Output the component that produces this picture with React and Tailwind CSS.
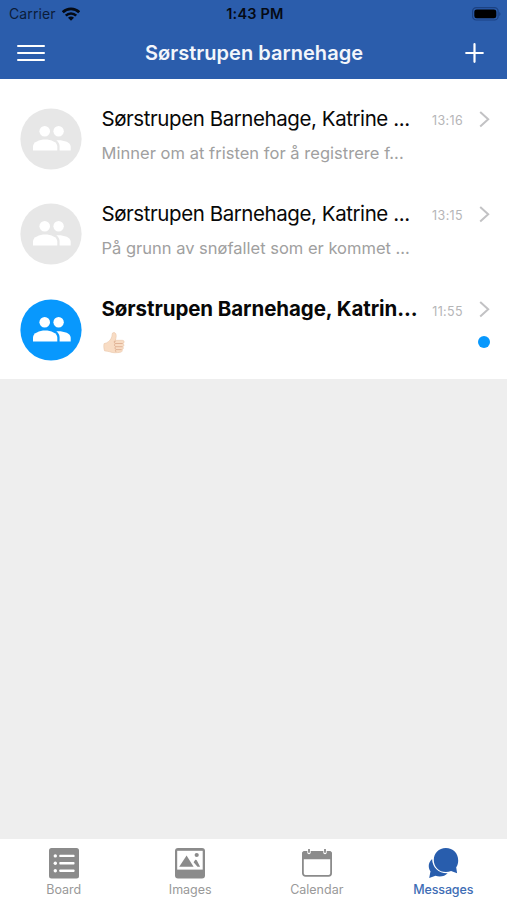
import React from "react";

const messages = [
  {
    id: 1,
    title: "Sørstrupen Barnehage, Katrine ...",
    preview: "Minner om at fristen for å registrere f...",
    previewStyle: "tracking-[0.030px]",
    time: "13:16",
    unread: false,
  },
  {
    id: 2,
    title: "Sørstrupen Barnehage, Katrine ...",
    preview: "På grunn av snøfallet som er kommet ...",
    previewStyle: "tracking-[0px]",
    time: "13:15",
    unread: false,
  },
  {
    id: 3,
    title: "Sørstrupen Barnehage, Katrin...",
    preview: null,
    time: "11:55",
    unread: true,
  },
];

const WifiIcon = () => (
  <svg width="18" height="14" viewBox="0 0 18 14" fill="none" stroke="#050a14" className="-mt-px">
    <path d="M.8 5.200C5.200.7 12.800.7 17.200 5.200" strokeWidth="2.700" />
    <path d="M3.800 8.600c2.900-2.900 7.500-2.900 10.400 0" strokeWidth="2.600" />
    <path d="M9 13.700 6 10.800c1.600-1.600 4.400-1.600 6 0z" fill="#050a14" stroke="none" />
  </svg>
);

const BatteryIcon = () => (
  <svg width="29" height="14" viewBox="0 0 29 14" className="-mt-px">
    <rect x="0.600" y="0.600" width="25.500" height="12.400" rx="3.600" fill="none" stroke="#1c4283" strokeWidth="1.200" />
    <rect x="2.300" y="2.400" width="22" height="8.900" rx="2.400" fill="#000" />
    <path d="M27.300 5v4c1.500-.6 1.500-3.400 0-4z" fill="#1c4283" />
  </svg>
);

const PeopleAvatar = ({ unread }) => (
  <svg width="62" height="62" viewBox="0 0 62 62" fill="#fff" className="ml-[20px] mt-[17px] shrink-0">
    <circle cx="31" cy="31" r="30.600" fill={unread ? "#0898fd" : "#e7e7e7"} />
    <circle cx="24.700" cy="23.300" r="5.300" />
    <circle cx="38.600" cy="23.300" r="5.200" />
    <path d="M13 42.500v-4c0-4.200 6.400-6.900 12.200-6.900s12.100 2.700 12.100 6.900v4z" />
    <path d="M39.600 42.500v-4.200c0-2.600-1.300-4.600-3.300-6.100 6.600-.5 14.400 1.600 14.400 6.300v4z" />
  </svg>
);

const ThumbIcon = () => (
  <svg width="22" height="22" viewBox="0 0 22 22">
    <path
      d="M1 11.700c1.600-.4 3.300-1 4.700-2.200C7.800 7.600 9.100 5.300 9.200 2c0-1.800 2.900-1.900 3.700-.1.700 1.700.1 4.100-.5 6.400h7c2.100 0 2.300 2.800.5 3.200 1.500.7 1.300 2.900-.2 3.200 1.100.8.800 2.700-.7 2.900.7 1-.1 2.600-1.500 2.600-3.500.8-8 .8-10.700-.4-1.500-.6-3.700-.6-5.200-.9-.8-2.200-1-4.700-.6-7.200z"
      fill="#f8dcc4"
      stroke="#e9c6aa"
      strokeWidth="0.600"
    />
    <path
      d="M12.400 8.300c-.7.400-1.200 1-1.300 1.800M12.400 11.500h7.300M12.700 14.700h6.800M13 17.600h5.600M12.600 9.500c-1.500.8-1.500 1.700-.2 2-1.300.8-1.100 2.500.3 3.200-1 .8-.8 2.300.3 2.900-.8.600-.7 1.700.2 2.300"
      fill="none"
      stroke="#dba98c"
      strokeWidth="0.800"
    />
  </svg>
);

const ChevronIcon = () => (
  <svg width="11" height="17" viewBox="0 0 11 17" fill="none" stroke="#c2c2c4" strokeWidth="2">
    <path d="M1.200 1 9.200 8.300l-8 7.300" />
  </svg>
);

const BoardIcon = () => (
  <svg width="30" height="31" viewBox="0 0 30 31">
    <rect width="30" height="30.500" rx="2.500" fill="#8b8b8b" />
    <g fill="#fff">
      <circle cx="6.300" cy="7.900" r="1.700" />
      <circle cx="6.300" cy="15.300" r="1.700" />
      <circle cx="6.300" cy="22.800" r="1.700" />
      <rect x="10.300" y="6.700" width="15.200" height="2.400" rx=".7" />
      <rect x="10.300" y="14.100" width="15.200" height="2.400" rx=".7" />
      <rect x="10.300" y="21.600" width="15.200" height="2.400" rx=".7" />
    </g>
  </svg>
);

const ImagesIcon = () => (
  <svg width="30" height="31" viewBox="0 0 30 31" fill="#8b8b8b">
    <rect width="30" height="30.500" rx="3" />
    <rect x="2.200" y="2.800" width="25.500" height="18.800" fill="#fff" />
    <path d="M4.200 18.800 11.600 7.500l7 11.300z" />
    <circle cx="21.700" cy="7" r="2.100" />
    <path d="m18.600 14.200 1.700-2.400c.7-.2 1.300.2 1.600.8l3.200 6.200h-2.600z" />
  </svg>
);

const CalendarIcon = () => (
  <svg width="30" height="30" viewBox="0 0 30 30">
    <rect x=".9" y="3.800" width="28.200" height="24" rx="2.500" fill="#fff" stroke="#8b8b8b" strokeWidth="1.800" />
    <path d="M0 11.300V5.600C0 4 1.300 3 2.800 3h24.400C28.700 3 30 4 30 5.600v5.700z" fill="#8b8b8b" />
    <rect x="5.300" y="1.400" width="3.400" height="4.800" rx="1.700" fill="#fff" />
    <rect x="21.300" y="1.400" width="3.400" height="4.800" rx="1.700" fill="#fff" />
    <path d="M7 1v3.700M23 1v3.700" stroke="#8b8b8b" strokeWidth="1.800" />
  </svg>
);

const MessagesIcon = () => (
  <svg width="31" height="31" viewBox="0 0 31 31" fill="#285dad">
    <path d="M4.100 11C-.6 15 .4 20.800 2.500 23.300L1.200 30l6.300-2.200c4.500 1.700 9.500.4 12.200-2.500C11 25.700 4.300 19.500 4.100 11z" />
    <path d="M17.800.1C10.800.1 5.800 5.400 5.800 12c0 6.700 5 12.100 12 12.100 1.900 0 3.700-.4 5.300-1.100l6 2.200-.9-5.900c1.300-1.900 2-4.300 2-6.900C30.200 5.400 25.100.1 17.800.1z" />
  </svg>
);

const tabs = [
  { name: "Board", icon: BoardIcon, active: false },
  { name: "Images", icon: ImagesIcon, active: false },
  { name: "Calendar", icon: CalendarIcon, active: false },
  { name: "Messages", icon: MessagesIcon, active: true },
];

const Header = () => (
  <header className="h-[79px] shrink-0 bg-[#2b5dac]">
    <div className="grid h-7 grid-cols-3 items-center pl-[9px] pr-[6px] text-[#050a14]">
      <div className="flex items-center gap-[6px]">
        <span className="-mt-[2px] text-[14px] tracking-[0.1px] text-[#0b1c39]">Carrier</span>
        <WifiIcon />
      </div>
      <span className="whitespace-nowrap text-center text-[14.500px] font-semibold tracking-[0.2px]">1:43 PM</span>
      <div className="flex justify-end">
        <BatteryIcon />
      </div>
    </div>
    <div className="flex h-[50px] items-center justify-between pl-[17px] pr-[23px]">
      <button className="flex w-7 flex-col gap-[5px]">
        <span className="h-[2px] w-full rounded bg-white"></span>
        <span className="h-[2px] w-full rounded bg-white"></span>
        <span className="h-[2px] w-full rounded bg-white"></span>
      </button>
      <h1 className="mr-[2px] whitespace-nowrap text-[20px] font-semibold tracking-[0.04px] text-[#f3f6fb]">
        Sørstrupen barnehage
      </h1>
      <button>
        <svg width="19" height="20" viewBox="0 0 19 20" stroke="#fff" strokeWidth="2.200" strokeLinecap="round">
          <path d="M9.500 1.200v17.600M1.200 10h16.600" />
        </svg>
      </button>
    </div>
  </header>
);

const MessageRow = ({ message }) => (
  <li className="flex h-[95.330px]">
    <PeopleAvatar unread={message.unread} />
    <div className="ml-[19.500px] mt-[13.500px] w-[320px] shrink-0 whitespace-nowrap">
      <h2
        className={`text-[20.500px] leading-7 text-[#080808] ${
          message.unread ? "font-bold tracking-[-0.080px]" : "font-normal tracking-[-0.430px]"
        }`}
      >
        {message.title}
      </h2>
      {message.preview ? (
        <p className={`mt-[8px] text-[16.500px] leading-6 text-[#a0a0a0] ${message.previewStyle}`}>{message.preview}</p>
      ) : (
        <div className="ml-[1px] mt-[9px]">
          <ThumbIcon />
        </div>
      )}
    </div>
    <div className="mt-[18px] flex flex-1 flex-col items-end pr-[17px]">
      <div className="flex items-center gap-[16px]">
        <time className="mt-[4px] whitespace-nowrap text-[12.500px] leading-4 tracking-[0.360px] text-[#b5b5b7]">
          {message.time}
        </time>
        <ChevronIcon />
      </div>
      {message.unread && <span className="mt-[16px] h-[12.500px] w-[12.500px] rounded-full bg-[#0898fd]"></span>}
    </div>
  </li>
);

const TabBar = () => (
  <nav className="grid h-[61px] shrink-0 grid-cols-4 bg-white pl-[0.500px] pr-[0.500px]">
    {tabs.map((tab) => (
      <button
        key={tab.name}
        className={`flex flex-col items-center pt-[9px] text-[12.500px] ${
          tab.active ? "text-[#3e6db5]" : "text-[#999]"
        }`}
      >
        <span className="h-[34px]">
          <tab.icon />
        </span>
        <span className={`leading-4 ${tab.active ? "font-medium tracking-[-0.150px]" : ""}`}>{tab.name}</span>
      </button>
    ))}
  </nav>
);

const App = () => {
  return (
    <div className="flex h-[900px] w-[507px] flex-col overflow-hidden bg-[#eee] font-[Inter,sans-serif]">
      <Header />
      <main className="flex-1">
        <ul className="h-[300px] bg-white pt-[12px]">
          {messages.map((message) => (
            <MessageRow key={message.id} message={message} />
          ))}
        </ul>
      </main>
      <TabBar />
    </div>
  );
};

export default App;
